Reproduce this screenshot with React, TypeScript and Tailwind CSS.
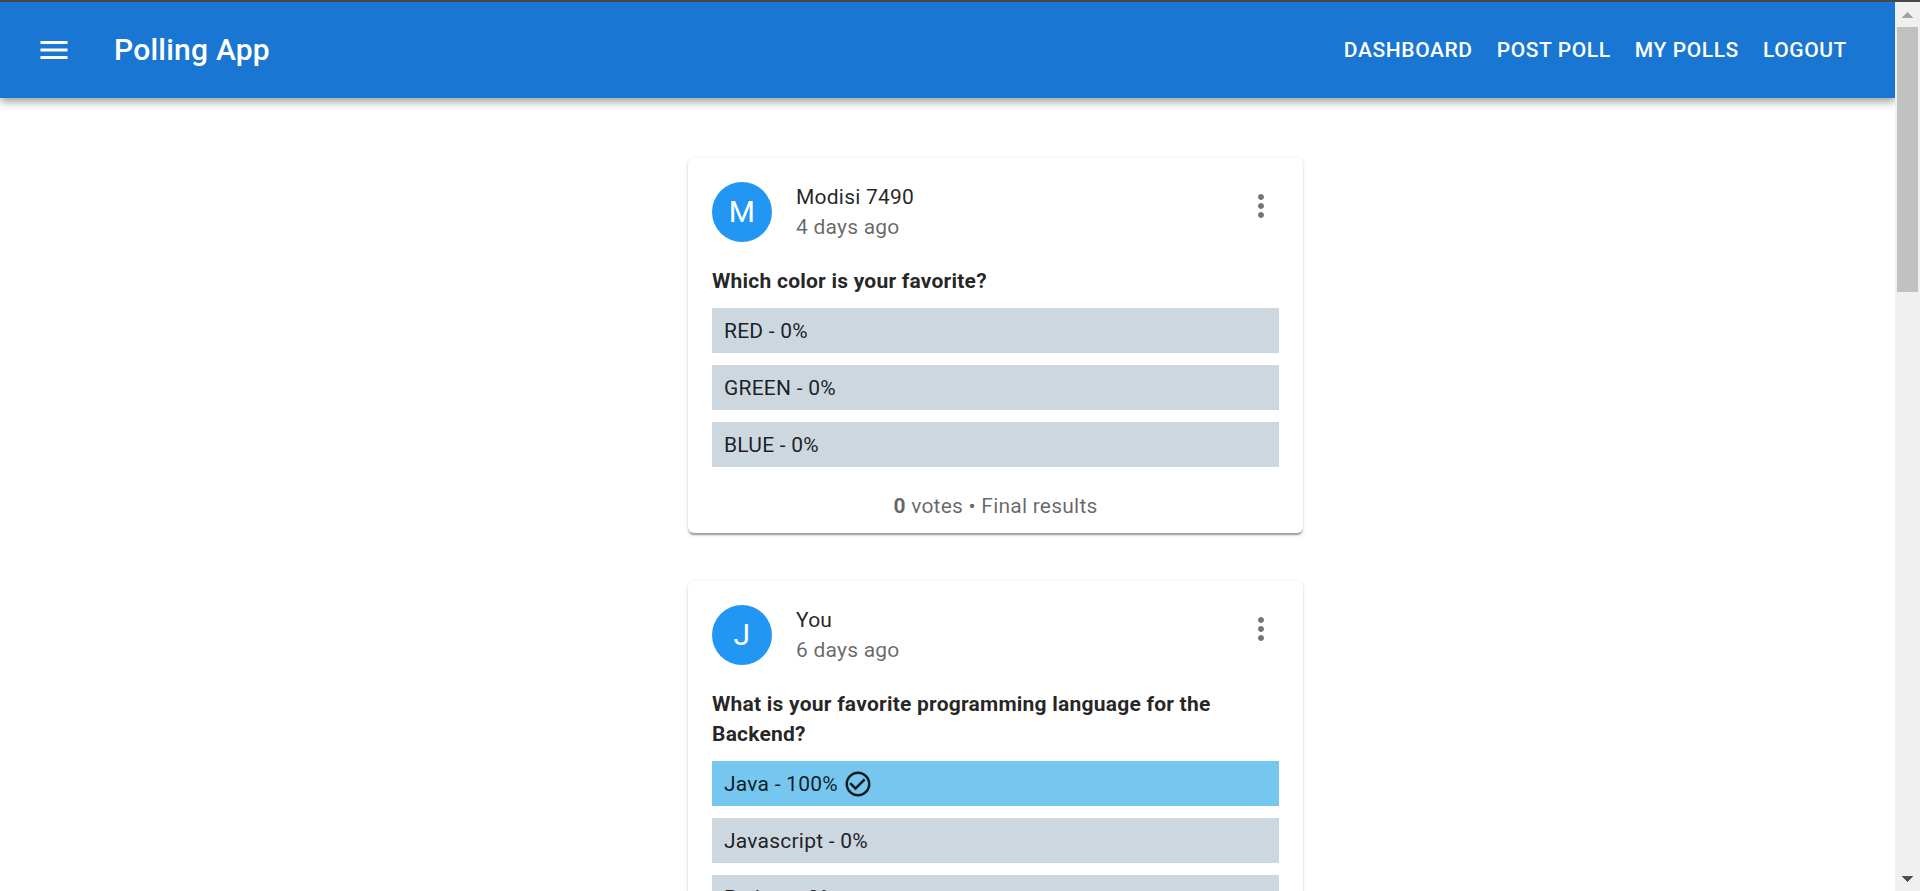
import { MdMenu, MdMoreVert } from 'react-icons/md';

type Option = { label: string; percent: number; chosen?: boolean };
type Poll = {
  author: string;
  initial: string;
  age: string;
  question: string;
  options: Option[];
  votes: number;
};

const polls: Poll[] = [
  {
    author: 'Modisi 7490',
    initial: 'M',
    age: '4 days ago',
    question: 'Which color is your favorite?',
    options: [
      { label: 'RED', percent: 0 },
      { label: 'GREEN', percent: 0 },
      { label: 'BLUE', percent: 0 },
    ],
    votes: 0,
  },
  {
    author: 'You',
    initial: 'J',
    age: '6 days ago',
    question: 'What is your favorite programming language for the Backend?',
    options: [
      { label: 'Java', percent: 100, chosen: true },
      { label: 'Javascript', percent: 0 },
      { label: 'Python', percent: 0 },
    ],
    votes: 1,
  },
];

function CheckCircle() {
  return (
    <svg viewBox="0 0 24 24" className="ml-[5px] size-[30px]" fill="currentColor">
      <path d="M16.59 7.58 10 14.17l-3.59-3.58L5 12l5 5 8-8zM12 2C6.48 2 2 6.48 2 12s4.48 10 10 10 10-4.48 10-10S17.52 2 12 2m0 18c-4.42 0-8-3.58-8-8s3.58-8 8-8 8 3.58 8 8-3.58 8-8 8" />
    </svg>
  );
}

function PollCard({ poll }: { poll: Poll }) {
  return (
    <article className="w-[615px] shrink-0 rounded-md bg-white px-6 pt-6 pb-3 shadow-[0_3px_1.5px_-1.5px_rgba(0,0,0,0.2),0_1.5px_1.5px_0_rgba(0,0,0,0.14),0_1.5px_4.5px_0_rgba(0,0,0,0.12)]">
      <header className="flex items-start">
        <div className="mr-6 flex size-[60px] items-center justify-center rounded-full bg-[#2196f3] text-[30px] leading-none text-white">
          {poll.initial}
        </div>
        <div className="flex-1">
          <div>{poll.author}</div>
          <div className="text-black/60">{poll.age}</div>
        </div>
        <button className="-mt-1.5 -mr-3 -mb-1.5 p-3 text-black/54" aria-label="Options">
          <MdMoreVert className="size-9" />
        </button>
      </header>
      <h2 className="mt-6 font-bold">{poll.question}</h2>
      <ul className="mt-3 flex flex-col gap-3">
        {poll.options.map((o) => (
          <li
            key={o.label}
            className={`flex h-[45px] items-center px-3 ${o.chosen ? 'bg-[#76c7f0]' : 'bg-[#cdd7e0]'}`}
          >
            {o.label} - {o.percent}%{o.chosen && <CheckCircle />}
          </li>
        ))}
      </ul>
      <p className="mt-6 text-center text-black/60">
        <b>{poll.votes}</b> votes • Final results
      </p>
    </article>
  );
}

export default function App() {
  return (
    <div className="flex h-[891px] flex-col overflow-hidden border-t-2 border-[#474747] bg-white font-[Roboto,sans-serif] text-[21px] leading-[30px] tracking-[0.01071em] text-black/87">
      <div className="flex min-h-0 flex-1">
        <div className="flex min-w-0 flex-1 flex-col overflow-hidden">
          <nav className="flex h-24 shrink-0 items-center bg-[#1976d2] px-9 text-white shadow-[0_3px_6px_-1.5px_rgba(0,0,0,0.2),0_6px_7.5px_0_rgba(0,0,0,0.14),0_1.5px_15px_0_rgba(0,0,0,0.12)]">
            <button className="-ml-[18px] mr-6 p-[18px]" aria-label="Menu">
              <MdMenu className="size-9" />
            </button>
            <h1 className="flex-1 text-[30px] leading-[48px] font-medium tracking-[0.0075em]">Polling App</h1>
            {['Dashboard', 'Post Poll', 'My Polls', 'Logout'].map((item) => (
              <a key={item} className="px-3 font-medium tracking-[0.02857em] uppercase">
                {item}
              </a>
            ))}
          </nav>
          <main className="flex flex-col items-center gap-12 pt-[60px] pl-24">
            {polls.map((p) => (
              <PollCard key={p.author} poll={p} />
            ))}
          </main>
        </div>
        <div className="flex w-[25px] shrink-0 flex-col items-center justify-between bg-[#f0f0f0]">
          <div className="flex flex-col items-center">
            <svg viewBox="0 0 11 6" className="mt-[10px] mb-[9px] h-1.5 w-[11px]" fill="#a3a3a3" shapeRendering="crispEdges">
              <path d="M0 6 5.5 0 11 6z" />
            </svg>
            <div className="h-[265px] w-[21px] bg-[#c1c1c1]" />
          </div>
          <svg viewBox="0 0 11 6" className="mb-[9px] h-1.5 w-[11px]" fill="#505050" shapeRendering="crispEdges">
            <path d="M0 0 5.5 6 11 0z" />
          </svg>
        </div>
      </div>
    </div>
  );
}
